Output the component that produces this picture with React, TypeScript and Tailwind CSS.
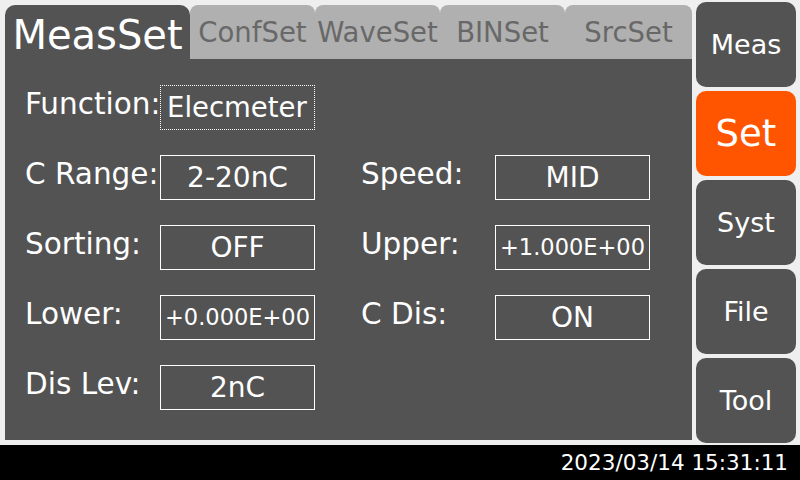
import React from 'react';

const font = "font-['DejaVu_Sans','Liberation_Sans',sans-serif]";

interface Field {
  label: string;
  value: string;
  small?: boolean;
}

const rows: [Field, Field | null][] = [
  [{ label: 'C Range:', value: '2-20nC' }, { label: 'Speed:', value: 'MID' }],
  [{ label: 'Sorting:', value: 'OFF' }, { label: 'Upper:', value: '+1.000E+00', small: true }],
  [{ label: 'Lower:', value: '+0.000E+00', small: true }, { label: 'C Dis:', value: 'ON' }],
  [{ label: 'Dis Lev:', value: '2nC' }, null],
];

const tabs = ['ConfSet', 'WaveSet', 'BINSet', 'SrcSet'];
const sideButtons = ['Meas', 'Set', 'Syst', 'File', 'Tool'];

function Cell({ field, labelWidth }: { field: Field; labelWidth: string }) {
  return (
    <>
      <div className={`${labelWidth} text-[29.5px] leading-none text-white pb-[5px] whitespace-nowrap`}>{field.label}</div>
      <div
        className={`w-[155px] h-[45px] border border-white flex items-center justify-center text-white whitespace-nowrap leading-none ${
          field.small ? 'text-[22.5px]' : 'text-[28px]'
        }`}
      >
        {field.value}
      </div>
    </>
  );
}

export default function App() {
  return (
    <div className={`w-[800px] h-[480px] bg-[#efefef] flex flex-col overflow-hidden ${font}`}>
      <div className="flex h-[445px]">
        {/* left: tabs + panel */}
        <div className="flex flex-col w-[692px] pl-[5px] pt-[5px] pb-[5px]">
          <div className="flex h-[54px]">
            <div className="w-[185px] bg-[#535353] rounded-t-[10px] flex items-center justify-center pt-[6px] text-white text-[40px] leading-none">
              MeasSet
            </div>
            {tabs.map((t, i) => (
              <div
                key={t}
                className={`${i === tabs.length - 1 ? 'w-[127px]' : 'w-[125px]'} bg-[#b0b0b0] rounded-t-[8px] flex items-center justify-center pt-[2px] text-[#686868] text-[27.5px] leading-none whitespace-nowrap`}
              >
                {t}
              </div>
            ))}
          </div>
          <div className="flex-1 bg-[#535353] pl-5 pt-[26px] flex flex-col gap-[25px]">
            <div className="flex items-center h-[45px]">
              <div className="w-[135px] text-[29.5px] leading-none text-white pb-[5px] whitespace-nowrap">Function:</div>
              <div className="w-[155px] h-[45px] border border-dotted border-white flex items-center pl-[6px] text-[27.5px] leading-none text-white">
                Elecmeter
              </div>
            </div>
            {rows.map(([l, r], i) => (
              <div key={i} className="flex items-center h-[45px]">
                <Cell field={l} labelWidth="w-[135px]" />
                {r && (
                  <>
                    <div className="w-[46px]" />
                    <Cell field={r} labelWidth="w-[134px]" />
                  </>
                )}
              </div>
            ))}
          </div>
        </div>
        {/* right sidebar */}
        <div className="flex flex-col gap-[4px] pl-[4px] pt-[2px] w-[104px]">
          {sideButtons.map((b) => (
            <div
              key={b}
              className={`h-[85px] w-[100px] rounded-[10px] flex items-center justify-center text-white leading-none ${
                b === 'Set' ? 'bg-[#ff5500] text-[37px]' : 'bg-[#535353] text-[27px]'
              }`}
            >
              {b}
            </div>
          ))}
        </div>
      </div>
      <div className="flex-1 bg-black flex items-center justify-end pr-[12px] pt-[2px] text-white text-[21.5px]">
        2023/03/14 15:31:11
      </div>
    </div>
  );
}
